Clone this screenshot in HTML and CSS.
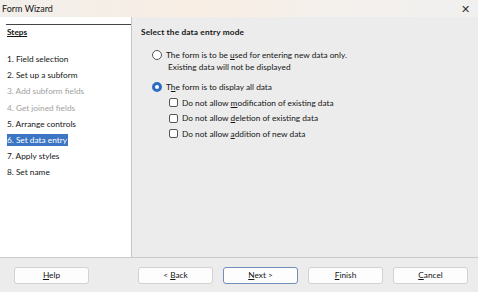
FILE: index.html
```html
<!DOCTYPE html>
<html lang="en">
<head>
    <meta charset="UTF-8">
    <title>Form Wizard</title>
    <link rel="stylesheet" href="styles.css">
</head>
<body>
    <div class="window">
        <div class="titlebar">
            <span class="title">Form Wizard</span>
            <span class="close">&#x2715;</span>
        </div>
        <div class="main">
            <div class="steps">
                <div class="steps-head"><u>Steps</u></div>
                <ul class="step-list">
                    <li>1. Field selection</li>
                    <li>2. Set up a subform</li>
                    <li class="off">3. Add subform fields</li>
                    <li class="off">4. Get joined fields</li>
                    <li>5. Arrange controls</li>
                    <li><span class="current">6. Set data entry</span></li>
                    <li>7. Apply styles</li>
                    <li>8. Set name</li>
                </ul>
            </div>
            <div class="page">
                <div class="page-title">Select the data entry mode</div>
                <div class="option">
                    <span class="radio"></span>
                    <span>The form is to be <u>u</u>sed for entering new data only.<br><span class="sub">Existing data will not be displayed</span></span>
                </div>
                <div class="option second">
                    <span class="radio on"></span>
                    <span>T<u>h</u>e form is to display all data</span>
                </div>
                <div class="checks">
                    <div class="check"><span class="box"></span><span>Do not allow <u>m</u>odification of existing data</span></div>
                    <div class="check"><span class="box"></span><span>Do not allow <u>d</u>eletion of existing data</span></div>
                    <div class="check"><span class="box"></span><span>Do not allow <u>a</u>ddition of new data</span></div>
                </div>
            </div>
        </div>
        <div class="buttons">
            <button><u>H</u>elp</button>
            <div class="nav">
                <button>&lt; <u>B</u>ack</button>
                <button class="default"><u>N</u>ext &gt;</button>
                <button><u>F</u>inish</button>
                <button><u>C</u>ancel</button>
            </div>
        </div>
    </div>
</body>
</html>
```

FILE: styles.css
```css
body {
    margin: 0;
    font-family: Lato, sans-serif;
    font-size: 8.3px;
    color: #151515;
    background: #ececec;
}
.window {
    width: 478px;
    height: 292px;
    display: flex;
    flex-direction: column;
}
.titlebar {
    height: 17px;
    display: flex;
    align-items: center;
    justify-content: space-between;
    padding: 0 8px 0 2px;
    background: linear-gradient(90deg, #f2efeb, #f8eee4 40%, #f4f0ec 70%, #f1f0ef);
    font-size: 9px;
}
.close {
    font-size: 11px;
    color: #333;
}
.main {
    display: flex;
    height: 240px;
    border-bottom: 1px solid #c9c9c9;
}
.steps {
    width: 131px;
    background: #fff;
    border-right: 1px solid #c6c6c6;
    padding-top: 7px;
}
.steps-head {
    margin-left: 6px;
    border-top: 1px solid #444;
    padding: 2px 0 0 1px;
    font-weight: bold;
    height: 24px;
}
.step-list {
    list-style: none;
    margin: 0;
    padding: 0 0 0 7px;
}
.step-list li {
    height: 16.2px;
    line-height: 16.2px;
}
.step-list .off {
    color: #a2a2a2;
}
.current {
    background: #3b75c4;
    color: #fff;
    padding: 1px 1px 1px 0;
}
.page {
    flex: 1;
    padding: 10px 0 0 9px;
}
.page-title {
    font-weight: bold;
    letter-spacing: 0.15px;
    height: 22px;
}
.option {
    display: flex;
    align-items: flex-start;
    margin: 0 0 0 11px;
    line-height: 12px;
}
.option .sub {
    padding-left: 2px;
}
.option.second {
    margin-top: 8px;
}
.radio {
    width: 8px;
    height: 8px;
    border: 1px solid #555;
    border-radius: 50%;
    margin: 1px 4px 0 0;
    background: #fff;
    flex: none;
}
.radio.on {
    border: 3px solid #2b6cc4;
    width: 4px;
    height: 4px;
}
.checks {
    margin: 2px 0 0 28px;
}
.check {
    display: flex;
    align-items: center;
    height: 15.5px;
}
.box {
    width: 7px;
    height: 7px;
    border: 1px solid #555;
    border-radius: 2px;
    background: #fff;
    margin-right: 4px;
}
.buttons {
    flex: 1;
    display: flex;
    align-items: center;
    justify-content: space-between;
    padding: 0 10px 0 14px;
}
.nav {
    display: flex;
    gap: 10px;
}
button {
    width: 75px;
    height: 17px;
    padding: 0;
    font-family: inherit;
    font-size: 8.3px;
    color: #151515;
    background: #fdfdfd;
    border: 1px solid #d2d2d2;
    border-radius: 3px;
}
button.default {
    border: 1px solid #6f8fb8;
}
```
